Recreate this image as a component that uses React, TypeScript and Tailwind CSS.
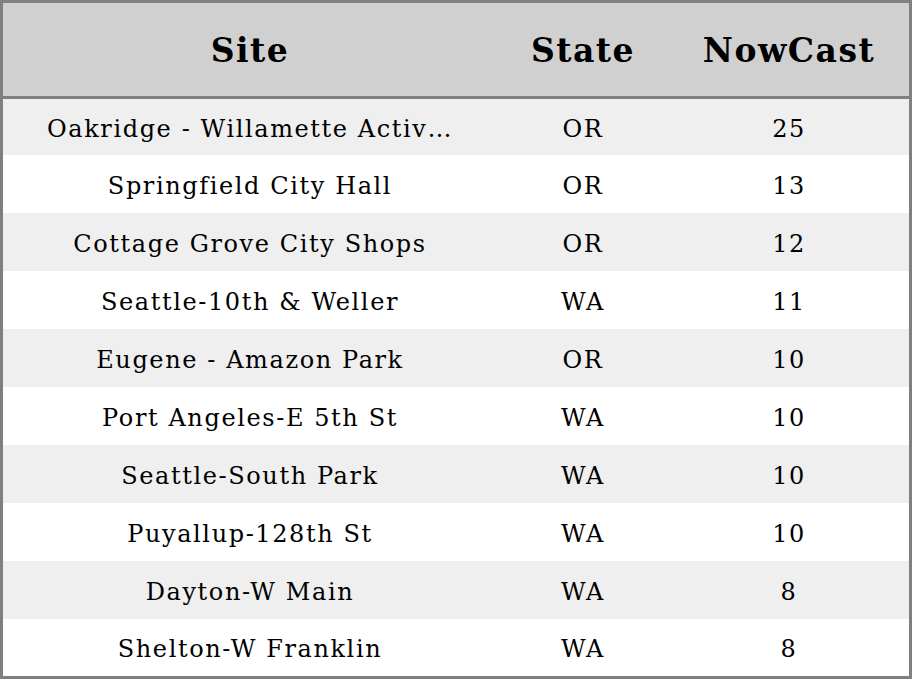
import React from 'react';

const rows: { site: string; state: string; nowcast: number }[] = [
  { site: 'Oakridge - Willamette Activity Center', state: 'OR', nowcast: 25 },
  { site: 'Springfield City Hall', state: 'OR', nowcast: 13 },
  { site: 'Cottage Grove City Shops', state: 'OR', nowcast: 12 },
  { site: 'Seattle-10th & Weller', state: 'WA', nowcast: 11 },
  { site: 'Eugene - Amazon Park', state: 'OR', nowcast: 10 },
  { site: 'Port Angeles-E 5th St', state: 'WA', nowcast: 10 },
  { site: 'Seattle-South Park', state: 'WA', nowcast: 10 },
  { site: 'Puyallup-128th St', state: 'WA', nowcast: 10 },
  { site: 'Dayton-W Main', state: 'WA', nowcast: 8 },
  { site: 'Shelton-W Franklin', state: 'WA', nowcast: 8 },
];

export default function App() {
  return (
    <div
      className="flex h-[679px] w-[912px] flex-col border-[3px] border-[#808080] bg-white text-black"
      style={{ fontFamily: '"DejaVu Serif", serif' }}
    >
      {/* header */}
      <div className="grid h-[96px] shrink-0 grid-cols-[494px_172px_1fr] items-center border-b-[3px] border-[#808080] bg-[#d0d0d0] pt-[2px] text-[33px] font-bold tracking-[1.5px]">
        <div className="text-center">Site</div>
        <div className="text-center">State</div>
        <div className="text-center">NowCast</div>
      </div>
      <div className="flex flex-1 flex-col">
        {rows.map((r, i) => (
          <div
            key={i}
            className={
              'grid shrink-0 grid-cols-[494px_172px_1fr] items-center pt-[3px] text-[24px] tracking-[1.6px] ' +
              (i === 0 ? 'h-[56px] ' : i === rows.length - 1 ? 'flex-1 ' : 'h-[58px] ') +
              (i % 2 === 0 ? 'bg-[#efefef]' : 'bg-white')
            }
          >
            <div className="truncate px-11 text-center">{r.site}</div>
            <div className="text-center">{r.state}</div>
            <div className="text-center">{r.nowcast}</div>
          </div>
        ))}
      </div>
    </div>
  );
}
